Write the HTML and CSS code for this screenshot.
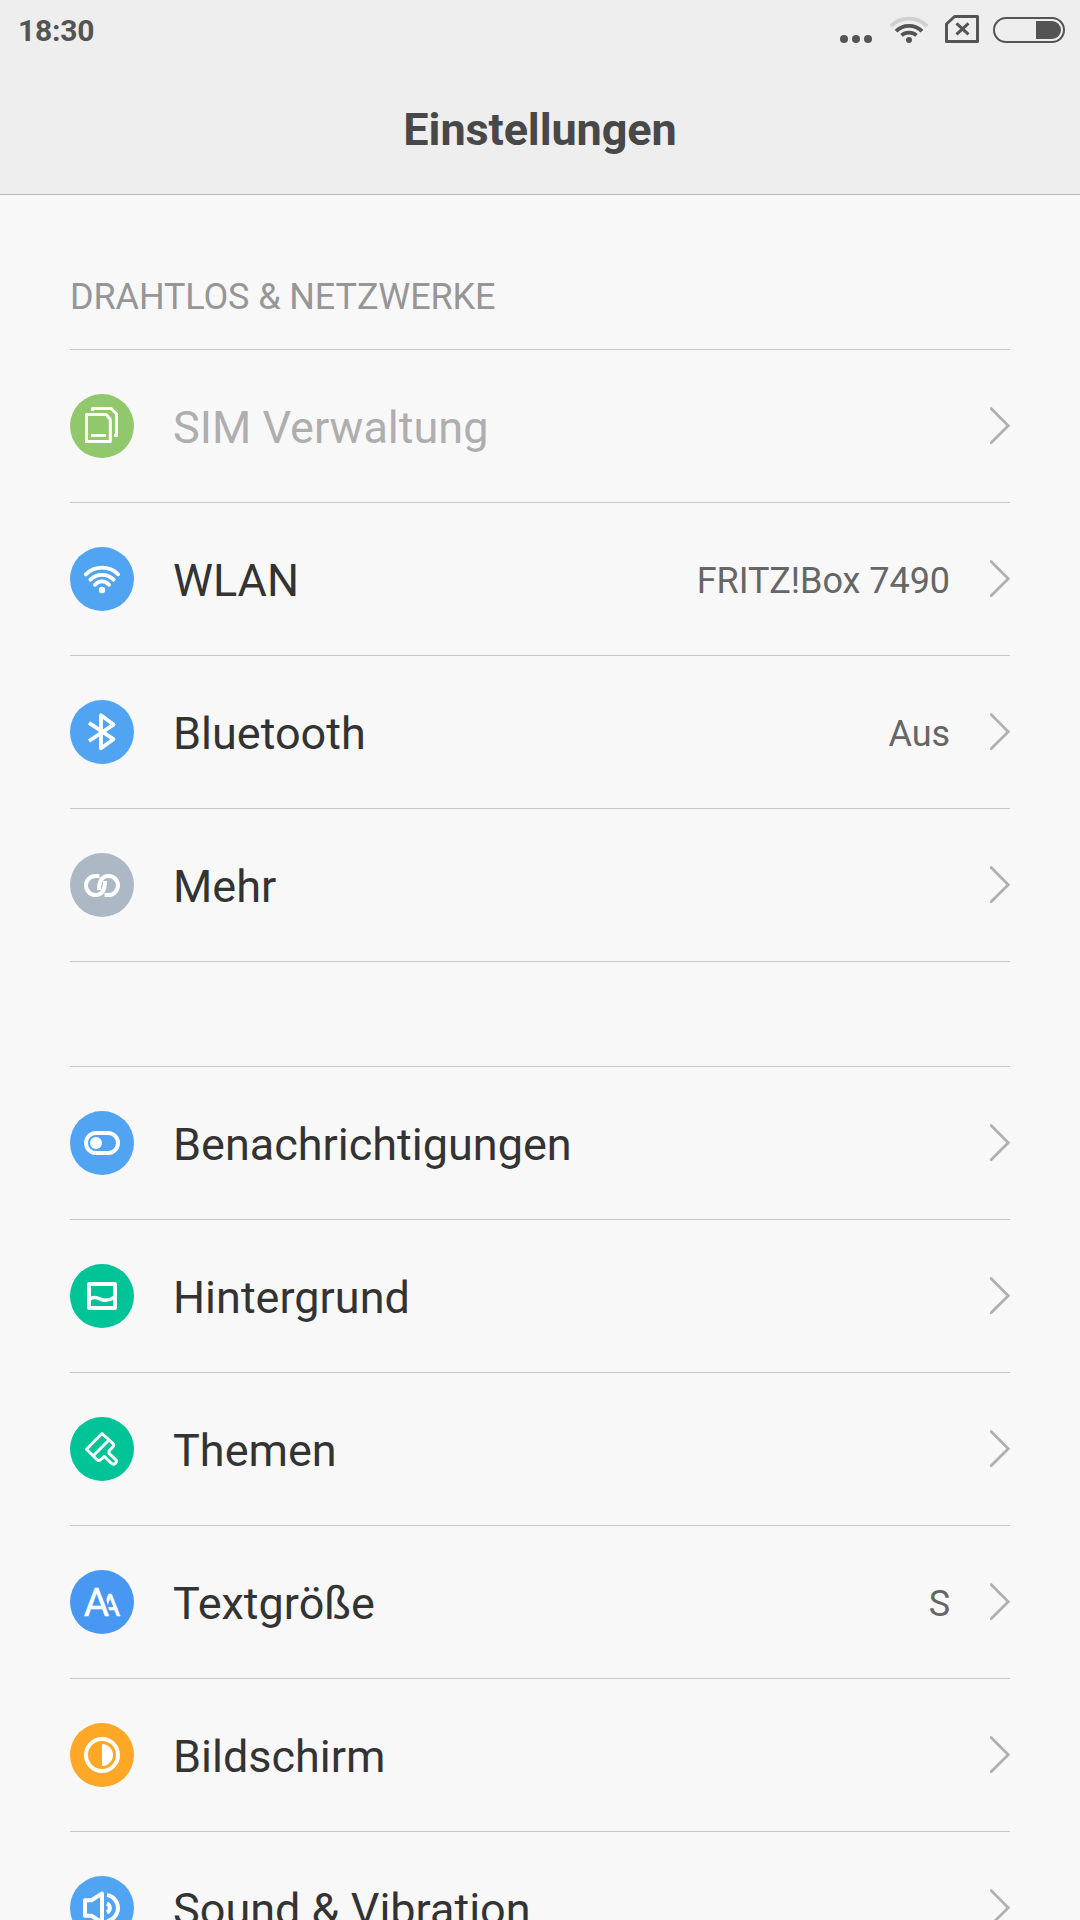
FILE: index.html
```html
<!DOCTYPE html>
<html lang="de">
<head>
    <meta charset="UTF-8">
    <meta name="viewport" content="width=device-width, initial-scale=1.0">
    <title>Einstellungen</title>
    <link rel="stylesheet" href="styles.css">
</head>
<body>

    <header>
        <div class="statusbar">
            <span class="time">18:30</span>
            <div class="status-icons">
                <svg class="dots" width="32" height="60" viewBox="0 0 32 60">
                    <circle cx="4" cy="39" r="4"/>
                    <circle cx="16" cy="39" r="4"/>
                    <circle cx="28" cy="39" r="4"/>
                </svg>
                <svg class="wifi" width="40" height="60" viewBox="0 0 40 60">
                    <path class="weak" d="M1.8 26.2A25.5 25.5 0 0 1 38.2 26.2"/>
                    <path d="M7 31.2A18.5 18.5 0 0 1 33 31.2"/>
                    <path d="M12.5 35.4A11.4 11.4 0 0 1 27.5 35.4"/>
                    <circle cx="20" cy="40" r="3"/>
                </svg>
                <svg class="nosim" width="34" height="60" viewBox="0 0 34 60">
                    <path d="M9.6 16.5H32.5V41.5H1.5V24Z"/>
                    <path d="M11.5 23.3L23.5 34.3M23.5 23.3L11.5 34.3"/>
                </svg>
                <svg class="battery" width="72" height="60" viewBox="0 0 72 60">
                    <rect x="1" y="18" width="70" height="24" rx="12"/>
                    <path d="M43 21H59A9 9 0 0 1 59 39H43Z"/>
                </svg>
            </div>
        </div>
        <h1>Einstellungen</h1>
    </header>

    <div class="container">
        <h2>DRAHTLOS &amp; NETZWERKE</h2>
        <div class="list">
            <!-- SIM -->
            <div class="item disabled">
                <svg class="icon lime" viewBox="0 0 64 64">
                    <path stroke-width="3" d="M16.5 20.5H36.2L40.3 25.5V47.5H16.5Z"/>
                    <path stroke-width="3" d="M21 41.4H36M22.5 17V14.5H41.2L46.5 20V41.5H44"/>
                </svg>
                <span class="label">SIM Verwaltung</span>
                <svg class="arrow" viewBox="0 0 20 38"><path d="M1.1 1.6L18.3 18.7L1.1 35.8"/></svg>
            </div>
            <!-- WLAN -->
            <div class="item">
                <svg class="icon blue" viewBox="0 0 64 64">
                    <g stroke-linecap="round" stroke-width="3.8">
                        <path d="M15.8 27.3A22.9 22.9 0 0 1 48.2 27.3"/>
                        <path d="M20.4 32.7A16.2 16.2 0 0 1 43.6 32.7"/>
                        <path d="M25 37.7A9.2 9.2 0 0 1 39 37.7"/>
                    </g>
                    <circle class="fill" cx="32" cy="43" r="3.2"/>
                </svg>
                <span class="label">WLAN</span>
                <span class="value">FRITZ!Box 7490</span>
                <svg class="arrow" viewBox="0 0 20 38"><path d="M1.1 1.6L18.3 18.7L1.1 35.8"/></svg>
            </div>
            <!-- Bluetooth -->
            <div class="item">
                <svg class="icon blue" viewBox="0 0 64 64">
                    <path stroke-width="3.8" d="M19 22.8L43.5 39.2L31 48.3V15.2L43.5 24.6L19 41"/>
                </svg>
                <span class="label">Bluetooth</span>
                <span class="value">Aus</span>
                <svg class="arrow" viewBox="0 0 20 38"><path d="M1.1 1.6L18.3 18.7L1.1 35.8"/></svg>
            </div>
            <!-- Mehr -->
            <div class="item">
                <svg class="icon gray" viewBox="0 0 64 64">
                    <path d="M29.5 23H25.5A9.5 9.5 0 0 0 25.5 42C32 42 35 37 35 28"/>
                    <path d="M34.5 42H38.5A9.5 9.5 0 0 0 38.5 23C32 23 29 28 29 37"/>
                </svg>
                <span class="label">Mehr</span>
                <svg class="arrow" viewBox="0 0 20 38"><path d="M1.1 1.6L18.3 18.7L1.1 35.8"/></svg>
            </div>
        </div>

        <div class="list">
            <!-- Benachrichtigungen -->
            <div class="item">
                <svg class="icon blue" viewBox="0 0 64 64">
                    <rect x="16" y="22" width="32" height="20" rx="10"/>
                    <circle class="fill" cx="26" cy="32" r="6"/>
                </svg>
                <span class="label">Benachrichtigungen</span>
                <svg class="arrow" viewBox="0 0 20 38"><path d="M1.1 1.6L18.3 18.7L1.1 35.8"/></svg>
            </div>
            <!-- Hintergrund -->
            <div class="item">
                <svg class="icon green" viewBox="0 0 64 64">
                    <rect x="19" y="20" width="26" height="24"/>
                    <path d="M20 34.8C25 31.5 28.5 34.5 32 35.8C36 37 40 36 44 33.5" stroke-width="3.6"/>
                </svg>
                <span class="label">Hintergrund</span>
                <svg class="arrow" viewBox="0 0 20 38"><path d="M1.1 1.6L18.3 18.7L1.1 35.8"/></svg>
            </div>
            <!-- Themen -->
            <div class="item">
                <svg class="icon green" viewBox="0 0 64 64">
                    <path stroke-width="3" d="M32 16.5L16.5 32.2L27 42.7Q28.7 44 30.5 42.7L34.5 39.5L41 46Q43.5 48.3 45.5 46.2Q47.3 44 45.5 42.3L39 36.3V34L43.2 29.5Q44.3 28 43 26.7Z"/>
                    <path stroke-width="3" d="M23.5 38.5L39 23"/>
                </svg>
                <span class="label">Themen</span>
                <svg class="arrow" viewBox="0 0 20 38"><path d="M1.1 1.6L18.3 18.7L1.1 35.8"/></svg>
            </div>
            <!-- Textgröße -->
            <div class="item">
                <svg class="icon royal" viewBox="0 0 64 64">
                    <clipPath id="cut"><path d="M33 16H64V50H41.5Z"/></clipPath>
                    <g clip-path="url(#cut)"><text class="small-a" x="29.5" y="46">A</text></g>
                    <text class="big-a" x="13.8" y="46">A</text>
                </svg>
                <span class="label">Textgröße</span>
                <span class="value">S</span>
                <svg class="arrow" viewBox="0 0 20 38"><path d="M1.1 1.6L18.3 18.7L1.1 35.8"/></svg>
            </div>
            <!-- Bildschirm -->
            <div class="item">
                <svg class="icon orange" viewBox="0 0 64 64">
                    <circle cx="32" cy="32" r="16"/>
                    <path class="fill" d="M32 21A11 11 0 0 1 32 43Z"/>
                </svg>
                <span class="label">Bildschirm</span>
                <svg class="arrow" viewBox="0 0 20 38"><path d="M1.1 1.6L18.3 18.7L1.1 35.8"/></svg>
            </div>
            <!-- Sound -->
            <div class="item">
                <svg class="icon blue" viewBox="0 0 64 64">
                    <path d="M15 24.2H21.5L32 17.5V46.5L21.5 39.8H15Z"/>
                    <path d="M37 18.9A13.3 13.3 0 0 1 37 45.1M37 27.5A5 5 0 0 1 37 36.5"/>
                </svg>
                <span class="label">Sound &amp; Vibration</span>
                <svg class="arrow" viewBox="0 0 20 38"><path d="M1.1 1.6L18.3 18.7L1.1 35.8"/></svg>
            </div>
        </div>
    </div>

</body>
</html>
```
FILE: styles.css
```css
body {
    font-family: Roboto, sans-serif;
    background-color: #f8f8f8;
    margin: 0;
    height: 1920px;
    overflow: hidden;
}
header {
    background-color: #eeeeee;
    border-bottom: 1px solid #bcbcbc;
    height: 194px;
}
.statusbar {
    display: flex;
    justify-content: space-between;
    height: 60px;
    padding: 0 15px 0 18px;
}
.time {
    color: #545454;
    font-size: 30px;
    font-weight: bold;
    line-height: 61px;
    letter-spacing: -0.2px;
}
.status-icons {
    display: flex;
    fill: #545454;
}
.wifi {
    margin-left: 17px;
}
.wifi path {
    fill: none;
    stroke: #545454;
    stroke-width: 3.8;
}
.wifi .weak {
    stroke: #d0d0d0;
}
.nosim {
    margin-left: 16px;
}
.nosim path {
    fill: none;
    stroke: #545454;
    stroke-width: 3;
    stroke-linejoin: round;
}
.battery {
    margin-left: 14px;
}
.battery rect {
    fill: none;
    stroke: #545454;
    stroke-width: 2;
}
h1 {
    color: #484848;
    font-size: 45px;
    font-weight: bold;
    line-height: 60px;
    letter-spacing: -0.1px;
    text-align: center;
    margin: 40px 0 0;
}
.container {
    margin: 0 70px;
}
h2 {
    color: #969696;
    font-size: 36px;
    font-weight: normal;
    line-height: 50px;
    letter-spacing: -0.12px;
    margin: 0;
    padding: 77px 0 27px;
}
.list {
    border-top: 1px solid #c8c8c8;
    margin-bottom: 104px;
}
.item {
    display: flex;
    align-items: center;
    height: 152px;
    border-bottom: 1px solid #c8c8c8;
}
.icon {
    width: 64px;
    height: 64px;
    border-radius: 50%;
    fill: none;
    stroke: white;
    stroke-width: 4;
    stroke-linejoin: round;
}
.icon .fill {
    fill: white;
    stroke: none;
}
.lime {
    background-color: #92c86c;
}
.blue {
    background-color: #50a4f2;
}
.gray {
    background-color: #acb9c4;
}
.green {
    background-color: #00c397;
}
.royal {
    background-color: #4898f3;
}
.orange {
    background-color: #ffa726;
}
.icon text {
    fill: white;
    stroke: white;
    stroke-width: 0.5;
}
.small-a {
    font-size: 32px;
}
.big-a {
    font-size: 39px;
}
.label {
    flex: 1;
    color: #333333;
    font-size: 45px;
    margin-left: 39px;
    padding-top: 3px;
}
.disabled .label {
    color: #aeaeae;
}
.value {
    color: #666666;
    font-size: 36px;
    letter-spacing: -0.05px;
    padding-top: 3px;
}
.arrow {
    width: 20px;
    height: 38px;
    margin-left: 40px;
    fill: none;
    stroke: #b0b0b0;
    stroke-width: 2.8;
    stroke-linecap: round;
}
```
